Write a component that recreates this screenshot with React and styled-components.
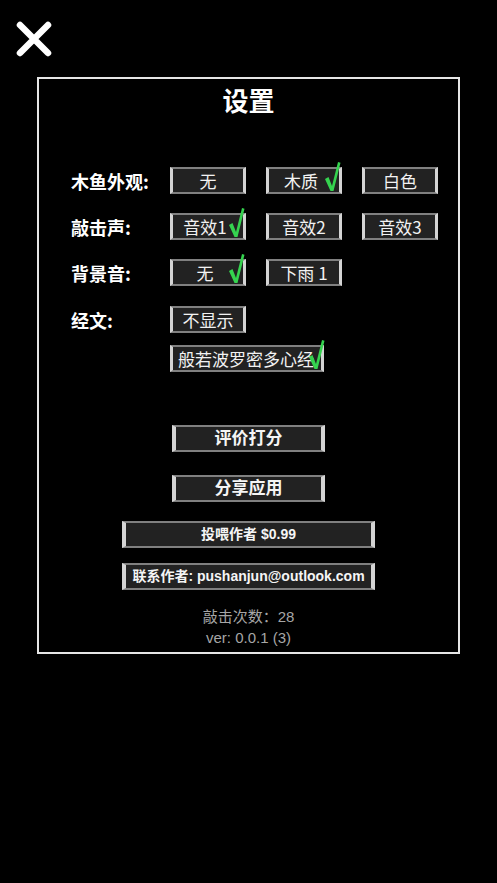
import styled, { createGlobalStyle } from 'styled-components';

const GlobalStyle = createGlobalStyle`
  html, body {
    margin: 0;
    padding: 0;
    background: #000;
  }
  body {
    font-family: 'Liberation Sans', 'Noto Sans CJK SC', sans-serif;
    color: #fff;
  }
`;

const Page = styled.div`
  width: 497px;
  min-height: 883px;
  background: #000;
  display: flex;
  flex-direction: column;
`;

const CloseButton = styled.button`
  margin: 20px 0 0 15px;
  width: 38px;
  height: 38px;
  padding: 0;
  border: none;
  background: transparent;
  display: flex;
`;

const Panel = styled.div`
  margin: 19px 0 0 37px;
  width: 423px;
  height: 577px;
  box-sizing: border-box;
  border: 2px solid #e6e6e6;
  display: flex;
  flex-direction: column;
  align-items: center;
`;

const Title = styled.h1`
  margin: 6px 0 0;
  font-family: 'Noto Sans CJK SC', sans-serif;
  font-size: 26px;
  line-height: 30px;
  font-weight: 700;
`;

const Options = styled.div`
  margin-top: 52px;
  align-self: stretch;
  padding-left: 32px;
  display: flex;
  flex-direction: column;
`;

const OptionRow = styled.div`
  display: grid;
  grid-template-columns: 99px 1fr;
  align-items: center;
  margin-top: ${(p) => p.$gap || 0}px;
`;

const Label = styled.div`
  font-family: 'Noto Sans CJK SC', sans-serif;
  font-size: 18px;
  font-weight: 700;
`;

const Choices = styled.div`
  display: flex;
  gap: 20px;
`;

const Chip = styled.button`
  position: relative;
  box-sizing: border-box;
  width: ${(p) => p.$width || 76}px;
  height: 27px;
  padding: 0;
  background: #222;
  color: #f2f2f2;
  border-style: solid;
  border-color: #808080 #d4d4d4;
  border-width: 2px 3px;
  font-family: 'Noto Sans CJK SC', sans-serif;
  font-size: 17px;
  line-height: 23px;
  text-align: ${(p) => (p.$left ? 'left' : 'center')};
  padding-left: ${(p) => (p.$left ? 5 : 0)}px;
  padding-right: ${(p) => (p.$shift ? 6 : 0)}px;
  white-space: nowrap;
  overflow: visible;
`;

const Tick = styled.svg`
  position: absolute;
  right: ${(p) => p.$right ?? -2}px;
  bottom: 0;
  width: 17px;
  height: 31px;
`;

const Actions = styled.div`
  display: flex;
  flex-direction: column;
  align-items: center;
`;

const ActionButton = styled.button`
  box-sizing: border-box;
  width: ${(p) => p.$width}px;
  height: 27px;
  margin-top: ${(p) => p.$gap}px;
  padding: 0;
  background: #222;
  color: #f5f5f5;
  border-style: solid;
  border-color: #808080 #d4d4d4;
  border-width: 2px 4px;
  font-family: 'Liberation Sans', 'Noto Sans CJK SC', sans-serif;
  font-size: ${(p) => p.$size}px;
  font-weight: 700;
  line-height: 23px;
  white-space: nowrap;
`;

const Footer = styled.div`
  margin-top: 16px;
  font-family: 'Liberation Sans', 'Noto Sans CJK SC', sans-serif;
  font-size: 15px;
  line-height: 21px;
  color: #a6a6a6;
  text-align: center;
`;

function Check({ right }) {
  return (
    <Tick $right={right} viewBox="0 0 17 31">
      <path d="M1 18 L4.5 16 L8 25 L14 1 L16.5 1.8 L9.5 30 L6.5 30 Z" fill="#35d34f" />
    </Tick>
  );
}

function Option({ children, checked, width, left, tickRight, shift }) {
  return (
    <Chip $width={width} $left={left} $shift={shift}>
      {children}
      {checked && <Check right={tickRight} />}
    </Chip>
  );
}

function App() {
  return (
    <Page>
      <GlobalStyle />
      <CloseButton aria-label="close">
        <svg width="38" height="38" viewBox="0 0 38 38">
          <path d="M5 5 L33 33 M33 5 L5 33" stroke="#fff" strokeWidth="6.5" strokeLinecap="round" />
        </svg>
      </CloseButton>

      <Panel>
        <Title>设置</Title>

        <Options>
          <OptionRow>
            <Label>木鱼外观:</Label>
            <Choices>
              <Option>无</Option>
              <Option checked shift>木质</Option>
              <Option>白色</Option>
            </Choices>
          </OptionRow>

          <OptionRow $gap={19}>
            <Label>敲击声:</Label>
            <Choices>
              <Option checked shift>音效1</Option>
              <Option>音效2</Option>
              <Option>音效3</Option>
            </Choices>
          </OptionRow>

          <OptionRow $gap={19}>
            <Label>背景音:</Label>
            <Choices>
              <Option checked shift>无</Option>
              <Option>下雨 1</Option>
            </Choices>
          </OptionRow>

          <OptionRow $gap={20}>
            <Label>经文:</Label>
            <Choices>
              <Option>不显示</Option>
            </Choices>
          </OptionRow>

          <OptionRow $gap={12}>
            <div />
            <Choices>
              <Option checked left width={154} tickRight={-4}>
                般若波罗密多心经
              </Option>
            </Choices>
          </OptionRow>
        </Options>

        <Actions>
          <ActionButton $width={153} $gap={53} $size={17}>评价打分</ActionButton>
          <ActionButton $width={153} $gap={23} $size={17}>分享应用</ActionButton>
          <ActionButton $width={253} $gap={19} $size={14}>投喂作者 $0.99</ActionButton>
          <ActionButton $width={253} $gap={15} $size={14}>
            联系作者: pushanjun@outlook.com
          </ActionButton>
        </Actions>

        <Footer>
          敲击次数：28
          <br />
          ver: 0.0.1 (3)
        </Footer>
      </Panel>
    </Page>
  );
}

export default App;
